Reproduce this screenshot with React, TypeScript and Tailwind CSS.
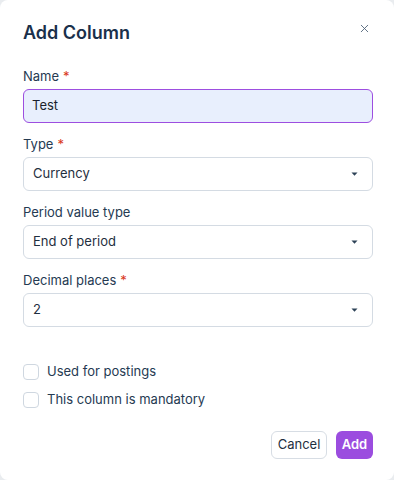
import { X } from "lucide-react"

function Caret() {
  return (
    <svg width="7" height="4" viewBox="0 0 7 4" className="text-[#2d4257]">
      <path d="M0.5 0.5 L6.5 0.5 L3.5 3.8 Z" fill="currentColor" />
    </svg>
  )
}

function Label({ text, required }: { text: string; required?: boolean }) {
  return (
    <div className="h-5 text-[13px] leading-5 text-[#253a52]">
      {text}
      {required && <span className="ml-1 text-[#d9361a]">*</span>}
    </div>
  )
}

function Select({ label, value, required }: { label: string; value: string; required?: boolean }) {
  return (
    <div className="mt-[11px] flex flex-col gap-[3px]">
      <Label text={label} required={required} />
      <div className="flex h-[34px] items-center justify-between rounded-md border border-[#d4dbe3] bg-white pl-[9px] pr-[14px] text-[13px] text-[#1f2f40]">
        <span>{value}</span>
        <Caret />
      </div>
    </div>
  )
}

function Check({ label }: { label: string }) {
  return (
    <label className="flex h-5 items-center gap-[8px] text-[13px] text-[#253a52]">
      <span className="h-4 w-4 rounded-[4px] border border-[#cfd7e0] bg-white" />
      {label}
    </label>
  )
}

export default function App() {
  return (
    <div className="h-[480px] w-[394px] bg-[#e9ecef] font-['Inter',sans-serif]">
      <div className="flex h-full w-full flex-col rounded-lg bg-white pl-[23px] pr-[21px] pt-[21px]">
        <div className="flex items-start justify-between">
          <h2 className="text-[18px] font-semibold leading-6 text-[#1a304b]">Add Column</h2>
          <X className="mr-[2px] mt-[1px] h-[13px] w-[13px] text-[#4a5f75]" strokeWidth={1.6} />
        </div>

        <div className="mt-[21px] flex flex-col gap-[3px]">
          <Label text="Name" required />
          <div className="flex h-[34px] items-center rounded-md border border-[#9d4ee0] bg-[#e8effd] pl-[8px] text-[13px] text-[#1a1f2b]">
            Test
          </div>
        </div>

        <Select label="Type" value="Currency" required />
        <Select label="Period value type" value="End of period" />
        <Select label="Decimal places" value="2" required />

        <div className="mt-[35px] flex flex-col gap-2">
          <Check label="Used for postings" />
          <Check label="This column is mandatory" />
        </div>

        <div className="mt-[21px] flex justify-end gap-[9px]">
          <button className="h-7 w-[56px] rounded-md border border-[#d7dde4] bg-white text-[13px] text-[#1f2f40]">
            Cancel
          </button>
          <button className="h-7 w-[37px] rounded-md bg-[#9b4ddf] text-[13px] font-semibold text-white">
            Add
          </button>
        </div>
      </div>
    </div>
  )
}
